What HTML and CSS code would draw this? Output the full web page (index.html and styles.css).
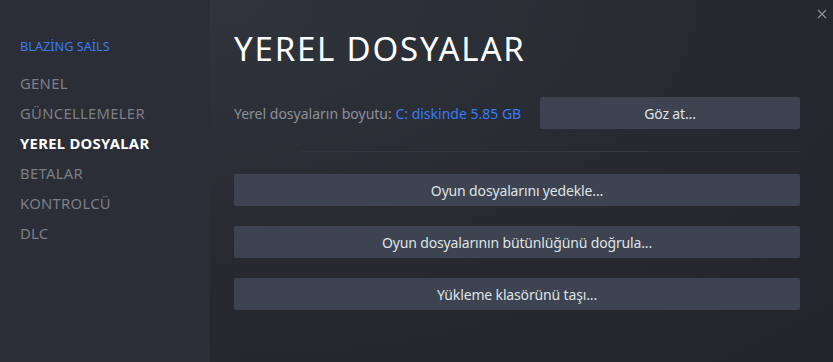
FILE: index.html
```html
<!DOCTYPE html>
<html lang="tr">
<head>
<meta charset="utf-8">
<link rel="stylesheet" href="styles.css">
</head>
<body>
<div class="dialog">
  <nav class="sidebar">
    <div class="game">BLAZİNG SAİLS</div>
    <ul class="menu">
      <li>GENEL</li>
      <li>GÜNCELLEMELER</li>
      <li class="active">YEREL DOSYALAR</li>
      <li>BETALAR</li>
      <li>KONTROLCÜ</li>
      <li>DLC</li>
    </ul>
  </nav>
  <main class="content">
    <h1 class="title">YEREL DOSYALAR</h1>
    <div class="size-row">
      <div class="size-text">Yerel dosyaların boyutu: <span class="link">C: diskinde 5.85 GB</span></div>
      <button class="btn btn-browse">Göz at...</button>
    </div>
    <div class="sep"></div>
    <div class="actions">
      <button class="btn">Oyun dosyalarını yedekle...</button>
      <button class="btn">Oyun dosyalarının bütünlüğünü doğrula...</button>
      <button class="btn">Yükleme klasörünü taşı...</button>
    </div>
  </main>
  <div class="close" aria-label="Kapat">
    <svg width="10" height="10" viewBox="0 0 10 10"><path d="M1 1L9 9M9 1L1 9" stroke="#8a8f98" stroke-width="1.3" fill="none"/></svg>
  </div>
</div>
</body>
</html>
```
FILE: styles.css
```css
* { box-sizing: border-box; }
html, body { margin: 0; padding: 0; }
body {
  width: 833px;
  height: 362px;
  overflow: hidden;
  background: #25282e;
  font-family: "Noto Sans", "Liberation Sans", sans-serif;
}
.dialog {
  position: relative;
  display: flex;
  width: 833px;
  height: 362px;
}
.sidebar {
  width: 210px;
  flex: none;
  background: #2b2e36;
  padding: 38px 0 0 20px;
}
.game {
  color: #3a7bf2;
  font-size: 12.7px;
  line-height: 16px;
}
.menu {
  list-style: none;
  margin: 14px 0 0 0;
  padding: 0;
}
.menu li {
  font-size: 14.8px;
  line-height: 30px;
  color: #7b7e86;
  letter-spacing: 0.3px;
}
.menu li.active {
  color: #ffffff;
  font-weight: 700;
}
.content {
  flex: 1;
  padding: 0 33px 0 24px;
  background: radial-gradient(ellipse 140% 130% at 0% 0%, #30343c 0%, #272a31 55%, #22252b 100%);
}
.title {
  margin: 27px 0 0 0;
  font-size: 33px;
  line-height: 44px;
  font-weight: 400;
  color: #ffffff;
  letter-spacing: 1.8px;
}
.size-row {
  display: flex;
  align-items: center;
  margin-top: 26px;
}
.size-text {
  flex: 1;
  font-size: 14px;
  color: #8b9099;
}
.link { color: #3a7bf2; }
.btn {
  display: block;
  height: 32px;
  border: none;
  border-radius: 2px;
  background: #3d4350;
  color: #dfe3e6;
  font-family: "Noto Sans", "Liberation Sans", sans-serif;
  font-size: 14px;
  letter-spacing: -0.15px;
  padding: 0;
  width: 100%;
}
.btn-browse {
  width: 260px;
  flex: none;
}
.sep {
  height: 1px;
  margin: 22px 0 0 66px;
  background: linear-gradient(90deg, rgba(70,76,88,0.2), #353942 30%, #2f333a 100%);
}
.actions {
  display: flex;
  flex-direction: column;
  gap: 20px;
  margin-top: 22px;
}
.close {
  position: absolute;
  right: 6px;
  top: 2px;
}
```
